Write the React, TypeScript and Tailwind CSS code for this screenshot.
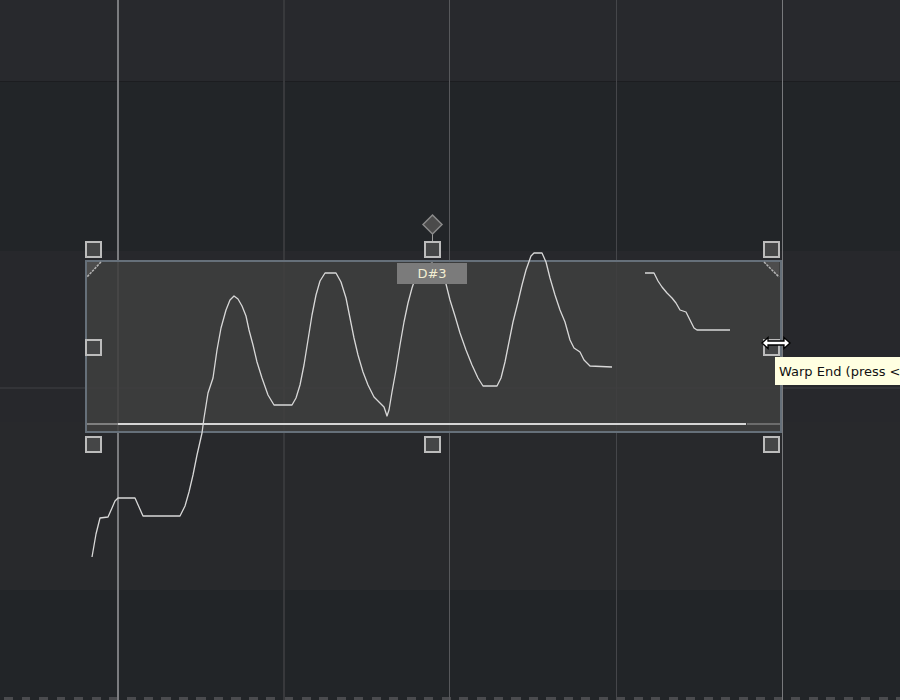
import React from 'react'

const curveA: [number, number][] = [
  [92, 557], [96, 534], [100, 518], [108, 517], [112, 508], [115, 501], [118, 498],
  [135, 498], [139, 507], [143, 516], [180, 516], [185, 506], [189, 492], [193, 475],
  [197, 455], [202, 433], [204, 418], [208, 393], [213, 378], [217, 350], [221, 328],
  [226, 310], [230, 300], [234, 296], [238, 299], [242, 306], [246, 316], [249, 330],
  [253, 345], [257, 362], [262, 378], [268, 395], [274, 405], [292, 405], [296, 398],
  [300, 385], [304, 365], [308, 340], [312, 315], [316, 295], [320, 281], [325, 273],
  [336, 273], [341, 282], [346, 298], [350, 318], [354, 338], [358, 355], [363, 372],
  [368, 385], [374, 397], [380, 403], [384, 407], [387, 416], [389, 410], [392, 392],
  [396, 370], [400, 345], [404, 322], [408, 303], [412, 288], [416, 276], [422, 266],
  [432, 263], [440, 267], [446, 284], [450, 300], [455, 316], [460, 333], [466, 350],
  [472, 365], [478, 378], [483, 386], [497, 386], [501, 378], [505, 362], [509, 342],
  [513, 322], [518, 302], [522, 285], [526, 270], [531, 256], [534, 253], [542, 253],
  [546, 262], [550, 278], [555, 295], [560, 310], [565, 322], [570, 340], [574, 348],
  [580, 352], [584, 360], [590, 366], [612, 367],
]

const curveB: [number, number][] = [
  [645, 273], [654, 273], [658, 281], [662, 287], [667, 293], [672, 298], [676, 303],
  [680, 310], [686, 312], [690, 320], [694, 328], [697, 330], [730, 330],
]

const pts = (p: [number, number][]) => p.map(([x, y]) => `${x},${y}`).join(' ')

function Handle() {
  return <div className="w-[17px] h-[17px] border-2 border-[#bcbcbc] bg-[#454647]" />
}

export default function App() {
  return (
    <div className="relative w-[900px] h-[700px] overflow-hidden bg-[#222528] font-['DejaVu_Sans',sans-serif]">
      {/* key rows */}
      <div className="flex flex-col h-full">
        <div className="h-[81px] bg-[#28292d]" />
        <div className="h-px bg-[#1c1d20]" />
        <div className="h-[169px] bg-[#222528]" />
        <div className="h-[136px] bg-[#27282c]" />
        <div className="h-[2px] bg-[#333438]" />
        <div className="h-[33px] bg-[#27282c]" />
        <div className="h-[168px] bg-[#28292c]" />
        <div className="flex-1 bg-[#222528] flex flex-col justify-end">
          <div className="h-[3px] bg-[repeating-linear-gradient(90deg,transparent_0_4px,#4a4b4e_4px_13px,transparent_13px_17.5px)]" />
        </div>
      </div>

      {/* bar / beat lines */}
      <div className="absolute inset-0 flex">
        <div className="w-[117px]" />
        <div className="w-[2px] bg-[#7b7c7f]" />
        <div className="w-[164px]" />
        <div className="w-[2px] bg-[#38393c]" />
        <div className="w-[164px]" />
        <div className="w-px bg-[#57585b]" />
        <div className="w-[166px]" />
        <div className="w-px bg-[#45464a]" />
        <div className="w-[165px]" />
        <div className="w-px bg-[#78797c]" />
      </div>

      {/* note block */}
      <div className="absolute left-[85px] top-[260px] w-[697px] h-[173px] border-2 border-[#66707a] bg-[rgba(63,63,63,0.88)] flex flex-col justify-end pb-[6px]">
        <div className="h-[2px] flex">
          <div className="w-[31px] bg-[#7f7f7f]" />
          <div className="w-[628px] bg-[#d5d5d5]" />
          <div className="flex-1 ml-px bg-[#6c6c6c]" />
        </div>
      </div>

      {/* corner triangles, velocity diamond */}
      <svg className="absolute left-0 top-0" width="900" height="700">
        <polygon points="87,262 101,262 87,277" fill="#4d4d4d" />
        <line x1="101" y1="262" x2="87" y2="277" stroke="#b4b4b4" strokeWidth="1.5" strokeDasharray="2.5 1" />
        <polygon points="764,262 779,262 779,277" fill="#4d4d4d" />
        <line x1="764" y1="262" x2="779" y2="277" stroke="#b4b4b4" strokeWidth="1.5" strokeDasharray="2.5 1" />
        <line x1="432.5" y1="232" x2="432.5" y2="241" stroke="#9a9a9a" strokeWidth="1" />
        <polygon points="432.5,215 442,224.5 432.5,234 423,224.5" fill="#4b4b4b" stroke="#8a8a8a" strokeWidth="1.5" />
      </svg>

      {/* resize handles */}
      <div className="absolute left-[85px] top-[241px] w-[695px] h-[212px] flex flex-col justify-between">
        <div className="flex justify-between">
          <Handle />
          <Handle />
          <Handle />
        </div>
        <div className="flex justify-between">
          <Handle />
          <Handle />
        </div>
        <div className="flex justify-between">
          <Handle />
          <Handle />
          <Handle />
        </div>
      </div>

      {/* pitch curve */}
      <svg className="absolute left-0 top-0" width="900" height="700">
        <polyline points={pts(curveA)} fill="none" stroke="#d8d8d8" strokeWidth="1.3" strokeLinejoin="round" />
        <polyline points={pts(curveB)} fill="none" stroke="#d8d8d8" strokeWidth="1.3" strokeLinejoin="round" />
      </svg>

      {/* note name */}
      <div className="absolute left-[397px] top-[263px] w-[70px] h-[21px] bg-[#7b7b7b] flex items-center justify-center text-[13px] text-[#f2eed2] leading-none">
        D#3
      </div>

      {/* cursor */}
      <svg className="absolute left-[761px] top-[336px]" width="30" height="14" viewBox="0 0 30 14">
        <path d="M1 7 L7 1.5 L7 5 L23 5 L23 1.5 L29 7 L23 12.5 L23 9 L7 9 L7 12.5 Z" fill="#ffffff" stroke="#000000" strokeWidth="1.3" strokeLinejoin="miter" />
      </svg>

      {/* tooltip */}
      <div className="absolute left-[775px] top-[357px] h-[28px] pl-[4px] pr-2 pt-[2px] bg-[#ffffe1] flex items-center text-[13px] text-[#111] whitespace-nowrap">
        Warp End (press &lt;
      </div>
    </div>
  )
}
